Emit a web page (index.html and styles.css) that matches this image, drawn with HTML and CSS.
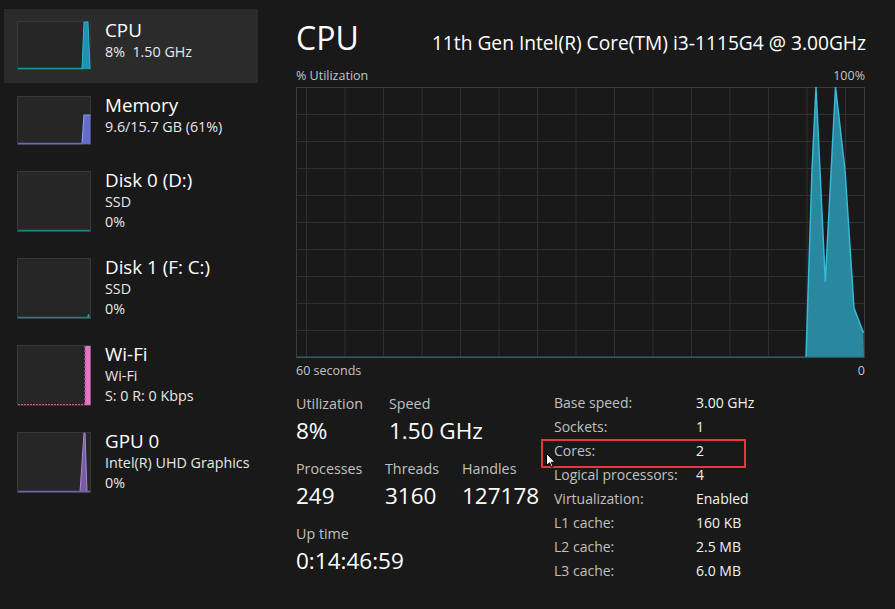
FILE: index.html
```html
<!DOCTYPE html>
<html>
<head>
<meta charset="utf-8">
<link rel="stylesheet" href="styles.css">
</head>
<body>
<div class="page">
  <aside class="sidebar">
    <div class="item selected">
      <svg class="thumb" width="74" height="49" viewBox="0 0 74 49">
        <rect x="0.5" y="0.5" width="73" height="48" class="tb"/>
        <polygon points="1,48 65,48 67,1 71,1 73,48" fill="#1f9fbf" opacity="0.9"/>
        <line x1="1" y1="47.5" x2="66" y2="47.5" stroke="#1f8fa8" stroke-width="1.5"/>
        <polyline points="65,48 67,1 71,1 73,48" fill="none" stroke="#2ab6d6" stroke-width="1"/>
      </svg>
      <div class="itext">
        <div class="ititle">CPU</div>
        <div class="isub">8%&nbsp; 1.50 GHz</div>
      </div>
    </div>
    <div class="item">
      <svg class="thumb" width="74" height="49" viewBox="0 0 74 49">
        <rect x="0.5" y="0.5" width="73" height="48" class="tb"/>
        <polygon points="65,48 67,19 73.5,19 73.5,48" fill="#6a78d8" opacity="0.9"/>
        <polyline points="65,48 67,19 73.5,19" fill="none" stroke="#8b96ee" stroke-width="1.2"/>
        <line x1="1" y1="47.5" x2="66" y2="47.5" stroke="#5f6cc8" stroke-width="1.5"/>
      </svg>
      <div class="itext">
        <div class="ititle">Memory</div>
        <div class="isub">9.6/15.7 GB (61%)</div>
      </div>
    </div>
    <div class="item">
      <svg class="thumb" width="74" height="61" viewBox="0 0 74 61">
        <rect x="0.5" y="0.5" width="73" height="60" class="tb"/>
        <line x1="1" y1="59.5" x2="73" y2="59.5" stroke="#1e7f80" stroke-width="1.5"/>
      </svg>
      <div class="itext">
        <div class="ititle">Disk 0 (D:)</div>
        <div class="isub">SSD</div>
        <div class="isub">0%</div>
      </div>
    </div>
    <div class="item">
      <svg class="thumb" width="74" height="61" viewBox="0 0 74 61">
        <rect x="0.5" y="0.5" width="73" height="60" class="tb"/>
        <polygon points="70,60 71,56 72,56 73,60" fill="#20a0a0"/>
        <line x1="1" y1="59.5" x2="73" y2="59.5" stroke="#1e7f80" stroke-width="1.5"/>
      </svg>
      <div class="itext">
        <div class="ititle">Disk 1 (F: C:)</div>
        <div class="isub">SSD</div>
        <div class="isub">0%</div>
      </div>
    </div>
    <div class="item">
      <svg class="thumb" width="74" height="61" viewBox="0 0 74 61">
        <rect x="0.5" y="0.5" width="73" height="60" class="tb"/>
        <rect x="68" y="1" width="5.5" height="59" fill="#e476c6"/>
        <line x1="68" y1="1" x2="68" y2="60" stroke="#a05a90" stroke-width="1.5" stroke-dasharray="2 2"/>
        <line x1="1" y1="59.5" x2="68" y2="59.5" stroke="#b0609c" stroke-width="1.2" stroke-dasharray="2 1"/>
      </svg>
      <div class="itext">
        <div class="ititle">Wi-Fi</div>
        <div class="isub">Wi-Fi</div>
        <div class="isub">S: 0 R: 0 Kbps</div>
      </div>
    </div>
    <div class="item">
      <svg class="thumb" width="74" height="61" viewBox="0 0 74 61">
        <rect x="0.5" y="0.5" width="73" height="60" class="tb"/>
        <polygon points="63,60 67,1 68,1 70,60" fill="#8e6cc0" opacity="0.8"/>
        <polyline points="63,60 67,1 68,1 70,60" fill="none" stroke="#a887dc" stroke-width="1"/>
        <line x1="1" y1="59.5" x2="73" y2="59.5" stroke="#7a5eaa" stroke-width="1.5"/>
      </svg>
      <div class="itext">
        <div class="ititle">GPU 0</div>
        <div class="isub">Intel(R) UHD Graphics</div>
        <div class="isub">0%</div>
      </div>
    </div>
  </aside>

  <main class="main">
    <div class="header">
      <div class="htitle">CPU</div>
      <div class="hname">11th Gen Intel(R) Core(TM) i3-1115G4 @ 3.00GHz</div>
    </div>
    <div class="axis top"><span>% Utilization</span><span>100%</span></div>
    <svg class="chart" width="569" height="271" viewBox="0 0 569 271">
      <g stroke="#303030" stroke-width="1">
        <line x1="0" y1="27.5" x2="569" y2="27.5"/>
        <line x1="0" y1="54.5" x2="569" y2="54.5"/>
        <line x1="0" y1="81.5" x2="569" y2="81.5"/>
        <line x1="0" y1="108.5" x2="569" y2="108.5"/>
        <line x1="0" y1="135.5" x2="569" y2="135.5"/>
        <line x1="0" y1="162.5" x2="569" y2="162.5"/>
        <line x1="0" y1="189.5" x2="569" y2="189.5"/>
        <line x1="0" y1="216.5" x2="569" y2="216.5"/>
        <line x1="0" y1="243.5" x2="569" y2="243.5"/>
        <line x1="10.5" y1="0" x2="10.5" y2="271"/>
        <line x1="49" y1="0" x2="49" y2="271"/>
        <line x1="87.5" y1="0" x2="87.5" y2="271"/>
        <line x1="126" y1="0" x2="126" y2="271"/>
        <line x1="164.5" y1="0" x2="164.5" y2="271"/>
        <line x1="203" y1="0" x2="203" y2="271"/>
        <line x1="241.5" y1="0" x2="241.5" y2="271"/>
        <line x1="280" y1="0" x2="280" y2="271"/>
        <line x1="318.5" y1="0" x2="318.5" y2="271"/>
        <line x1="357" y1="0" x2="357" y2="271"/>
        <line x1="395.5" y1="0" x2="395.5" y2="271"/>
        <line x1="434" y1="0" x2="434" y2="271"/>
        <line x1="472.5" y1="0" x2="472.5" y2="271"/>
        <line x1="511" y1="0" x2="511" y2="271"/>
        <line x1="549.5" y1="0" x2="549.5" y2="271"/>
      </g>
      <rect x="0.5" y="0.5" width="568" height="270" fill="none" stroke="#3c3c3c" stroke-width="1"/>
      <polygon points="510,270 516,83 520,0 529.3,195 539.5,0 549,83 558,221 567.5,246 568,270" fill="#2a90a9" opacity="0.92"/>
      <polyline points="510,270 516,83 520,0 529.3,195 539.5,0 549,83 558,221 567.5,246" fill="none" stroke="#37b8d7" stroke-width="1.5"/>
      <line x1="1" y1="270" x2="568" y2="270" stroke="#2d6f80" stroke-width="1.2"/>
    </svg>
    <div class="axis bottom"><span>60 seconds</span><span>0</span></div>

    <div class="stats">
      <div class="lstats">
        <div class="srow">
          <div class="stat w93"><div class="slabel">Utilization</div><div class="svalue">8%</div></div>
          <div class="stat"><div class="slabel">Speed</div><div class="svalue">1.50 GHz</div></div>
        </div>
        <div class="srow">
          <div class="stat w89"><div class="slabel">Processes</div><div class="svalue">249</div></div>
          <div class="stat w77"><div class="slabel">Threads</div><div class="svalue">3160</div></div>
          <div class="stat"><div class="slabel">Handles</div><div class="svalue">127178</div></div>
        </div>
        <div class="srow">
          <div class="stat"><div class="slabel">Up time</div><div class="svalue">0:14:46:59</div></div>
        </div>
      </div>
      <div class="rstats">
        <div class="kv"><span class="k">Base speed:</span><span class="v">3.00 GHz</span></div>
        <div class="kv"><span class="k">Sockets:</span><span class="v">1</span></div>
        <div class="kv"><span class="k">Cores:</span><span class="v">2</span></div>
        <div class="kv"><span class="k">Logical processors:</span><span class="v">4</span></div>
        <div class="kv"><span class="k">Virtualization:</span><span class="v">Enabled</span></div>
        <div class="kv"><span class="k">L1 cache:</span><span class="v">160 KB</span></div>
        <div class="kv"><span class="k">L2 cache:</span><span class="v">2.5 MB</span></div>
        <div class="kv"><span class="k">L3 cache:</span><span class="v">6.0 MB</span></div>
      </div>
    </div>
  </main>

  <div class="highlight"></div>
  <svg class="cursor" width="10" height="15" viewBox="0 0 10 15">
    <path d="M0.5,0.5 L0.5,12.5 L3.5,9.8 L5.6,14.2 L7.2,13.5 L5.2,9.2 L9,9.2 Z" fill="#ffffff" stroke="#000000" stroke-width="1"/>
  </svg>
</div>
</body>
</html>
```

FILE: styles.css
```css
html, body {
  margin: 0;
  padding: 0;
  background: #191919;
}
body {
  font-family: "Open Sans", "Noto Sans", "DejaVu Sans", sans-serif;
  color: #f2f2f2;
  width: 895px;
  height: 609px;
  overflow: hidden;
}
.page {
  position: relative;
  display: flex;
  width: 895px;
  height: 609px;
}
.sidebar {
  width: 254px;
  padding: 9px 0 0 4px;
  display: flex;
  flex-direction: column;
}
.item {
  display: flex;
  align-items: flex-start;
  padding: 12px 0 14px 13px;
  gap: 14px;
}
.item.selected {
  background: #2b2b2b;
  padding-bottom: 13px;
  margin-bottom: 1px;
}
.thumb {
  display: block;
  flex: none;
}
.tb {
  fill: #262626;
  stroke: #383838;
  stroke-width: 1;
}
.itext {
  margin-top: -2px;
  max-height: 61px;
}
.ititle {
  font-size: 18.8px;
  line-height: 23px;
  color: #ffffff;
}
.isub {
  font-size: 14.3px;
  line-height: 20px;
  color: #e8e8e8;
}
.main {
  margin-left: 38px;
  width: 570px;
  padding-top: 18px;
  display: flex;
  flex-direction: column;
}
.header {
  display: flex;
  justify-content: space-between;
  align-items: baseline;
  height: 40px;
}
.htitle {
  font-size: 32px;
  line-height: 40px;
  color: #ffffff;
}
.hname {
  font-size: 19.2px;
  color: #ffffff;
}
.axis {
  display: flex;
  justify-content: space-between;
  width: 569px;
  font-size: 12.5px;
  line-height: 16px;
  color: #c4c4c4;
}
.axis.top {
  margin-top: 10px;
  margin-bottom: 3px;
}
.axis.bottom {
  margin-top: 5px;
}
.chart {
  display: block;
}
.stats {
  display: flex;
  margin-top: 12px;
}
.lstats {
  width: 258px;
  display: flex;
  flex-direction: column;
  gap: 11px;
  padding-top: 3px;
}
.srow {
  display: flex;
}
.stat {
  display: flex;
  flex-direction: column;
}
.w93 { width: 93px; }
.w89 { width: 89px; }
.w77 { width: 77px; }
.slabel {
  font-size: 14.3px;
  line-height: 20px;
  color: #c0c0c0;
}
.svalue {
  font-size: 22.5px;
  line-height: 34px;
  color: #ffffff;
}
.rstats {
  display: flex;
  flex-direction: column;
}
.kv {
  display: flex;
  font-size: 14px;
  line-height: 24px;
}
.k {
  width: 142px;
  color: #c0c0c0;
}
.v {
  color: #f2f2f2;
}
.highlight {
  position: absolute;
  left: 541px;
  top: 439px;
  width: 201px;
  height: 25px;
  border: 2px solid #e3383c;
}
.cursor {
  position: absolute;
  left: 546px;
  top: 453px;
}
```
